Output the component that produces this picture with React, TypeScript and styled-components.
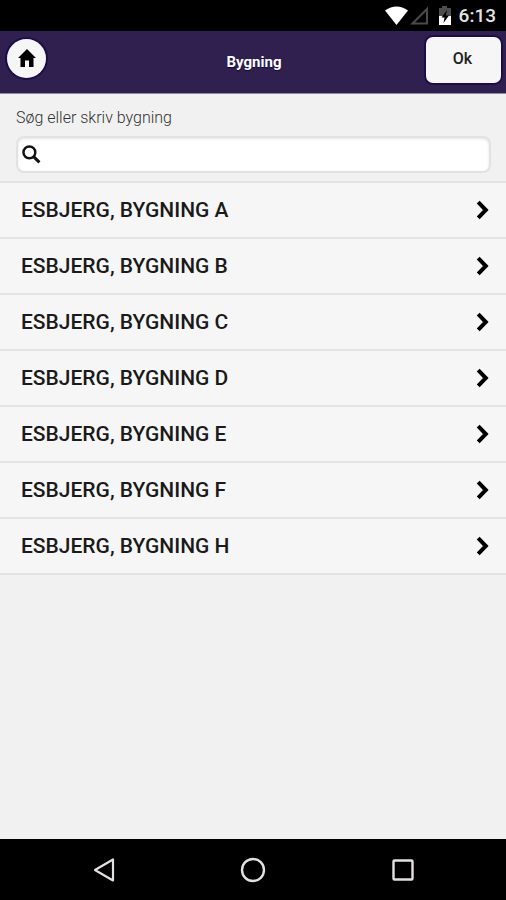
import React, { useState } from "react";
import styled, { createGlobalStyle } from "styled-components";

const GlobalStyle = createGlobalStyle`
  *, *::before, *::after { box-sizing: border-box; }
  body { margin: 0; background: #f1f1f1; }
  body, button, input { font-family: Roboto, "Liberation Sans", sans-serif; }
`;

const Screen = styled.div`
  display: flex;
  flex-direction: column;
  min-height: 100vh;
  color: #111;
`;

const StatusBar = styled.div`
  display: flex;
  align-items: center;
  justify-content: flex-end;
  height: 31px;
  padding: 1px 10px 0 0;
  background: #000;
`;

const StatusIcons = styled.svg`
  display: block;
  width: 68px;
  height: 20px;
  margin-right: 7px;
`;

const Clock = styled.time`
  color: #e4e4e4;
  font-size: 19px;
  font-weight: 500;
  line-height: 24px;
`;

const Header = styled.header`
  display: grid;
  grid-template-columns: 1fr auto 1fr;
  align-items: center;
  height: 63px;
  padding: 0 5px 4px 7px;
  background: #30204f;
  border-bottom: 1px solid #8f899c;
`;

const HomeButton = styled.button`
  display: grid;
  place-items: center;
  width: 39px;
  height: 39px;
  margin-bottom: 4px;
  padding: 0;
  border: 0;
  border-radius: 50%;
  background: #f6f6f6;
  box-shadow: 0 0 0 2px #1c0c4b;
`;

const Title = styled.h1`
  margin: 4px 0 0;
  color: #fff;
  font-size: 15px;
  font-weight: 700;
  line-height: 20px;
  text-shadow: 0 1px 1px #120638;
`;

const OkButton = styled.button`
  justify-self: end;
  width: 75px;
  height: 46px;
  padding: 0 2px 4px 0;
  border: 0;
  border-radius: 7px;
  background: #f6f6f6;
  box-shadow: 0 0 0 2px #1c0c4b;
  color: #222;
  font-size: 16px;
  font-weight: 500;
`;

const Content = styled.main`
  flex: 1;
`;

const SearchArea = styled.form`
  display: flex;
  flex-direction: column;
  gap: 8px;
  padding: 14px 15px 8px 16px;
`;

const SearchLabel = styled.label`
  color: #333;
  font-size: 16px;
  font-weight: 300;
  line-height: 20px;
`;

const SearchBox = styled.div`
  display: flex;
  align-items: center;
  height: 37px;
  padding-left: 4px;
  border: 2px solid #e2e2e2;
  border-radius: 8px;
  background: #fff;
  box-shadow: inset 0 1px 3px #e4e4e4;
`;

const SearchInput = styled.input`
  flex: 1;
  min-width: 0;
  height: 30px;
  padding: 0 8px;
  border: 0;
  outline: 0;
  background: transparent;
  font-size: 16px;
`;

const List = styled.ul`
  margin: 0;
  padding: 0;
  list-style: none;
  border-top: 2px solid #e3e3e3;
`;

const RowLink = styled.a`
  display: flex;
  align-items: center;
  justify-content: space-between;
  height: 56px;
  padding: 0 17px 1px 21px;
  border-bottom: 2px solid #e3e3e3;
  background: #f6f6f6;
  color: #1a1a1a;
  font-size: 21px;
  font-weight: 500;
  line-height: 24px;
  text-decoration: none;
`;

const Icon = styled.svg`
  display: block;
  flex: none;
`;

const NavBar = styled.nav`
  display: grid;
  grid-template-columns: repeat(3, 1fr);
  height: 61px;
  padding: 0 28px 0 29px;
  background: #000;
`;

const NavButton = styled.button`
  display: grid;
  place-items: center;
  padding: 0;
  border: 0;
  background: transparent;
`;

const buildings = ["A", "B", "C", "D", "E", "F", "H"];

const StatusGlyphs = () => (
  <StatusIcons viewBox="0 0 68 20" role="img" aria-label="Wi-Fi, no signal, battery charging">
    <path d="M1 4.5Q12.5-3.5 24 4.5L12.5 19Z" fill="#fff" />
    <path d="M43 3V17.5H28.5Z" fill="none" stroke="#4a4a4a" strokeWidth="2" />
    <path d="M55 2H58V0H63V2H67V19H55Z" fill="#4d4d4d" />
    <path d="M55 10H67V19H55Z" fill="#fff" />
    <path d="M63 4L57.5 11.5H60.5L59.5 17L65 9.5H61.8Z" fill="#000" />
  </StatusIcons>
);

const HomeIcon = () => (
  <Icon width="18" height="18" viewBox="0 0 18 18" aria-hidden="true">
    <path d="M9 0L18 9H15.5V18H11V11.5H7V18H2.5V9H0Z" fill="#000" />
  </Icon>
);

const SearchIcon = () => (
  <Icon width="19" height="19" viewBox="0 0 18 18" fill="none" stroke="#111" aria-hidden="true">
    <circle cx="7" cy="7" r="5.6" strokeWidth="2.3" />
    <path d="M11 11L16.5 16.5" strokeWidth="2.8" />
  </Icon>
);

const ChevronIcon = () => (
  <Icon width="13" height="20" viewBox="0 0 13 20" fill="none" stroke="#000" aria-hidden="true">
    <path d="M2.2 2.2L9.8 10L2.2 17.8" strokeWidth="4" />
  </Icon>
);

const BackIcon = () => (
  <Icon width="24" height="26" viewBox="0 0 24 26" fill="none" stroke="#e4e0e0" aria-hidden="true">
    <path d="M21 2.5V23.5L3 13Z" strokeWidth="2.2" strokeLinejoin="round" />
  </Icon>
);

const CircleIcon = () => (
  <Icon width="26" height="26" viewBox="0 0 26 26" fill="none" stroke="#e4e0e0" aria-hidden="true">
    <circle cx="13" cy="13" r="11" strokeWidth="2.4" />
  </Icon>
);

const SquareIcon = () => (
  <Icon width="24" height="24" viewBox="0 0 24 24" fill="none" stroke="#e4e0e0" aria-hidden="true">
    <rect x="2.5" y="2.5" width="19" height="19" rx="1" strokeWidth="2.4" />
  </Icon>
);

export default function App() {
  const [query, setQuery] = useState("");
  return (
    <>
      <GlobalStyle />
      <Screen>
        <StatusBar>
          <StatusGlyphs />
          <Clock>6:13</Clock>
        </StatusBar>
        <Header>
          <HomeButton type="button" aria-label="Hjem">
            <HomeIcon />
          </HomeButton>
          <Title>Bygning</Title>
          <OkButton type="submit" form="building-search">Ok</OkButton>
        </Header>
        <Content>
          <SearchArea id="building-search" onSubmit={(event) => event.preventDefault()}>
            <SearchLabel htmlFor="building">Søg eller skriv bygning</SearchLabel>
            <SearchBox>
              <SearchIcon />
              <SearchInput
                id="building"
                type="text"
                value={query}
                onChange={(event) => setQuery(event.target.value)}
              />
            </SearchBox>
          </SearchArea>
          <List>
            {buildings
              .map((letter) => `ESBJERG, BYGNING ${letter}`)
              .filter((name) => name.includes(query.toUpperCase()))
              .map((name) => (
                <li key={name}>
                  <RowLink href="#">
                    <span>{name}</span>
                    <ChevronIcon />
                  </RowLink>
                </li>
              ))}
          </List>
        </Content>
        <NavBar aria-label="System">
          <NavButton type="button" aria-label="Tilbage">
            <BackIcon />
          </NavButton>
          <NavButton type="button" aria-label="Startskærm">
            <CircleIcon />
          </NavButton>
          <NavButton type="button" aria-label="Oversigt">
            <SquareIcon />
          </NavButton>
        </NavBar>
      </Screen>
    </>
  );
}
